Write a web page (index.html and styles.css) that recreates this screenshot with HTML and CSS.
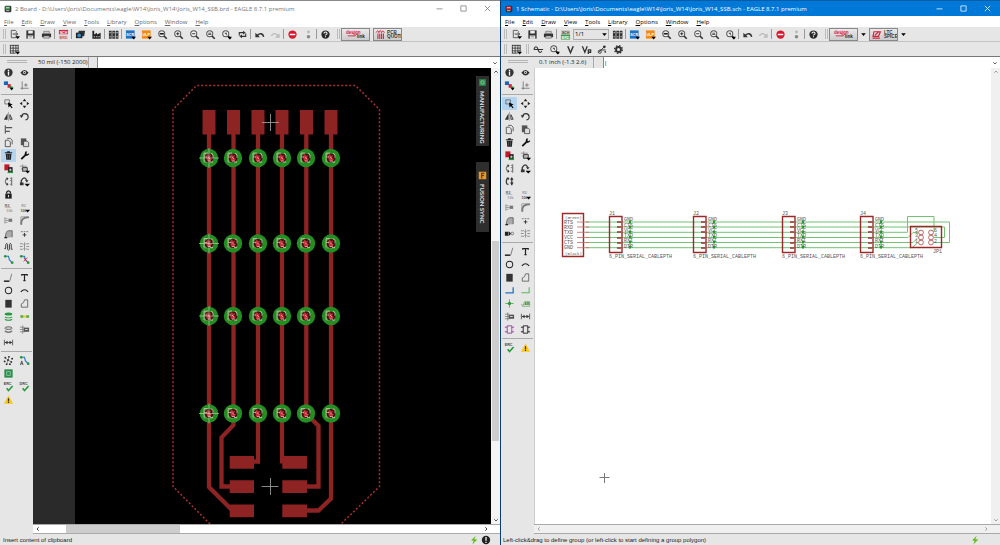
FILE: index.html
```html
<!DOCTYPE html>
<html lang="en">
<head>
<meta charset="utf-8">
<title>EAGLE 8.7.1 premium</title>
<link rel="stylesheet" href="styles.css">
</head>
<body>
<svg class="defs" aria-hidden="true">
<defs>
<symbol id="open" viewBox="0 0 12 12"><path d="M7 1.500H2.500v8H8V8M7 1.500l1.500 1.500" fill="none" stroke="#555"/><path d="M4 5.500h5M7.500 3.500l2 2-2 2" fill="none" stroke="#333"/><path d="M7 8h5l-2.500 3z"/></symbol>
<symbol id="save" viewBox="0 0 12 12"><path d="M1.500 1.500h9v9h-9z" fill="#333"/><path d="M3.500 2h5v3h-5zM3 7h6v3.500H3z" fill="#eee"/><path d="M4 8.500h4" stroke="#888"/></symbol>
<symbol id="print" viewBox="0 0 12 12"><path d="M1 5h10v4H1z" fill="#333"/><path d="M3 2.500h6V5H3zM3 7.500h6V10H3z" fill="#ccc" stroke="#555" stroke-width=".6"/></symbol>
<symbol id="sch" viewBox="0 0 12 12"><path d="M1 1h10v5H1z" fill="#d2263c"/><path d="M1 6h10v5.500H1z" fill="#ddd"/><text x="6" y="5.200" class="mini" fill="#fff">SCH</text><text x="6" y="10.400" class="mini" fill="#c55">BRD</text></symbol>
<symbol id="brd" viewBox="0 0 12 12"><path d="M1 1h10v5H1z" fill="#cfcfcf"/><path d="M1 6h10v5.500H1z" fill="#3f9a48"/><text x="6" y="5.200" class="mini" fill="#444">SCH</text><text x="6" y="10.400" class="mini" fill="#fff">BRD</text></symbol>
<symbol id="cam" viewBox="0 0 12 12"><path d="M4 2h7l-1 6H3z" fill="#333"/><path d="M1 4h7v6H1z" fill="#222"/><circle cx="4.500" cy="7" r="2" fill="#2b8ed0"/></symbol>
<symbol id="factory" viewBox="0 0 12 12"><path d="M1.500 10.500V2h2V6l3-2v2l4-2V10.500z" fill="#222"/><path d="M3 8.500h7" stroke="#ddd" stroke-dasharray="1.500 1"/></symbol>
<symbol id="books" viewBox="0 0 12 12"><path d="M1 2h3v8.500H1zM4.700 2h3v8.500h-3zM8.400 2h3v8.500h-3z" fill="#333"/><path d="M1.500 4h9.500M1.500 8.500h9.500" stroke="#bbb" stroke-dasharray="2 1.700"/></symbol>
<symbol id="scr" viewBox="0 0 12 12"><path d="M1 1.500h9.500v9H1z" fill="#1f74c4"/><text x="5.700" y="7.500" class="mini" fill="#fff">SCR</text><path d="M7 8.500h5l-2.500 3z"/></symbol>
<symbol id="ulp" viewBox="0 0 12 12"><path d="M1 1.500h9.500v9H1z" fill="#f28a13"/><text x="5.700" y="7.500" class="mini" fill="#fff">ULP</text><path d="M7 8.500h5l-2.500 3z"/></symbol>
<symbol id="lens" viewBox="0 0 12 12"><circle cx="5.200" cy="5.200" r="3.300" fill="#f2f2f2" stroke="#555" stroke-width="1.100"/><path d="M7.600 7.600l3 3" stroke="#333" stroke-width="1.800"/></symbol>
<symbol id="fit" viewBox="0 0 12 12"><use href="#lens"/><path d="M3 5.200h4.500" stroke="#222" stroke-width="1.800"/></symbol>
<symbol id="zin" viewBox="0 0 12 12"><use href="#lens"/><path d="M3.500 5.200h3.400M5.200 3.500v3.400" stroke="#222"/></symbol>
<symbol id="zout" viewBox="0 0 12 12"><use href="#lens"/><path d="M3.500 5.200h3.400" stroke="#222"/></symbol>
<symbol id="zredraw" viewBox="0 0 12 12"><use href="#lens"/><path d="M3.500 4.600h3.400M3.500 6h3.400" stroke="#222" stroke-width=".8"/></symbol>
<symbol id="zsel" viewBox="0 0 12 12"><use href="#lens"/><path d="M3.500 4h3v3z" fill="#555"/><path d="M7 8.500h5l-2.500 3z"/></symbol>
<symbol id="refresh" viewBox="0 0 12 12"><path d="M2.500 7V4h5M9.500 5v3h-5" fill="none" stroke="#333" stroke-width="1.200"/><path d="M6.500 2l3 2-3 2zM5.500 6l-3 2 3 2z" fill="#333"/></symbol>
<symbol id="undo" viewBox="0 0 12 12"><path d="M10.500 8.500C10 5 7 4 3.500 7" fill="none" stroke="#333" stroke-width="1.700"/><path d="M1.500 4v5h5z" fill="#333"/></symbol>
<symbol id="redo" viewBox="0 0 12 12"><path d="M1.500 7.500C3 4 6 4.500 8.500 7" fill="none" stroke="#bbb" stroke-width="1.500"/><path d="M10.500 4.500v5h-5z" fill="#bbb"/></symbol>
<symbol id="stop" viewBox="0 0 12 12"><circle cx="6" cy="6" r="4.500" fill="#d9182e"/><path d="M3 6h6" stroke="#fff" stroke-width="1.600"/></symbol>
<symbol id="go" viewBox="0 0 12 12"><circle cx="6" cy="3.300" r="1.600" fill="#bbb"/><circle cx="6" cy="8.500" r="1.900" fill="#888"/></symbol>
<symbol id="help" viewBox="0 0 12 12"><circle cx="6" cy="6" r="4.500" fill="#2a2a2a"/><path d="M4.300 4.800c0-2 3.400-2 3.400 0 0 1.200-1.700 1-1.700 2.200M6 7.800v1.200" fill="none" stroke="#fff" stroke-width="1.100"/></symbol>
<symbol id="grid" viewBox="0 0 12 12"><path d="M1.500 1v9M4.500 1v9M7.500 1v9M10 1v7M1 1.500h9.500M1 4.500h9.500M1 7.500h9.500M1 10h6" stroke="#333" stroke-width=".9"/><path d="M7 8.500h5l-2.500 3z"/></symbol>
<symbol id="wave" viewBox="0 0 12 12"><path d="M1 6c1-4 3.500-4 4.500 0s3 4 4 1.500M1 6h10" fill="none" stroke="#333" stroke-width="1.200"/></symbol>
<symbol id="volt" viewBox="0 0 12 12"><path d="M3 2.500l3 7 3-7" fill="none" stroke="#333" stroke-width="1.600"/></symbol>
<symbol id="voltp" viewBox="0 0 12 12"><path d="M1.500 2.500l2.700 6.500 2.600-6.500M8 11V6.500h2.500v2.500H8" fill="none" stroke="#333" stroke-width="1.400"/></symbol>
<symbol id="probe" viewBox="0 0 12 12"><path d="M2 9l6-6M3 6.500h6.500" stroke="#333"/><circle cx="8" cy="3" r="1.500" fill="#333"/><circle cx="3" cy="8.500" r="1.700" fill="none" stroke="#333"/><circle cx="9" cy="8.500" r="1" fill="#333"/></symbol>
<symbol id="gear" viewBox="0 0 12 12"><circle cx="6" cy="6" r="2.700" fill="none" stroke="#333" stroke-width="2"/><circle cx="6" cy="6" r="4.200" fill="none" stroke="#333" stroke-width="1.500" stroke-dasharray="1.600 1.700"/></symbol>
<symbol id="info" viewBox="0 0 12 12"><circle cx="6" cy="6" r="4.500" fill="#333"/><path d="M6 3v1.500M6 5.200v4" stroke="#fff" stroke-width="1.500"/></symbol>
<symbol id="eye" viewBox="0 0 12 12"><path d="M1.500 6.200q4.500-6 9 0-4.500 6-9 0z" fill="#333"/><circle cx="6" cy="6" r="1.600" fill="#eee"/><circle cx="6" cy="6" r=".8" fill="#333"/></symbol>
<symbol id="layers" viewBox="0 0 12 12"><path d="M1 1.500h4.500v4H1z" fill="#1765b8"/><path d="M5 4.500h3.500v4H5z" fill="#d2263c"/><path d="M7.500 7h3v3h-3z" fill="#249b3b"/><path d="M7.500 8.500h4l-2 3z"/></symbol>
<symbol id="mark" viewBox="0 0 12 12"><path d="M3.500 1.500v9M1.500 9h9M5.500 5.500h4M7.500 3.500v4" stroke="#666" stroke-width=".8"/></symbol>
<symbol id="group" viewBox="0 0 12 12"><path d="M2 2h5v4.500H2z" fill="none" stroke="#555" stroke-width=".8"/><path d="M5.500 5l5 2-2 1 2 2.500-1 .8-2-2.500-1.500 1.500z"/></symbol>
<symbol id="move" viewBox="0 0 12 12"><path d="M6 .8L8 3.500H4zM6 11.200L4 8.500h4zM.8 6L3.500 4v4zM11.200 6L8.500 8V4z" fill="#222"/></symbol>
<symbol id="mirror" viewBox="0 0 12 12"><path d="M5 2.500v7H1z" fill="#333"/><path d="M7.500 4v5H10z" fill="none" stroke="#333"/><path d="M6 1v10" stroke="#777" stroke-width=".6"/></symbol>
<symbol id="rotate" viewBox="0 0 12 12"><path d="M3 6a3.500 3.500 0 1 1 4 3.800" fill="none" stroke="#333" stroke-width="1.200"/><path d="M.8 4.500h4L2.500 7.500z" fill="#333"/></symbol>
<symbol id="align" viewBox="0 0 12 12"><path d="M2.500 1.500v9" stroke="#333"/><path d="M3 4h7M3 8h4.500" stroke="#555" stroke-width="1.500"/></symbol>
<symbol id="copy" viewBox="0 0 12 12"><path d="M4.500 1.500h3.500l2 2V8M2.500 3.500H6l2 2v5H2.500z" fill="none" stroke="#444" stroke-width=".9"/></symbol>
<symbol id="paste" viewBox="0 0 12 12"><path d="M2 1.500h6V9H2z" fill="#555"/><path d="M5 4.500h4l1.500 1.500v4.500H5z" fill="#ddd" stroke="#333" stroke-width=".8"/></symbol>
<symbol id="trash" viewBox="0 0 12 12"><path d="M2 3h8M4.500 2h3" stroke="#222" stroke-width="1.200"/><path d="M3 4h6.200l-.6 6.500h-5z" fill="#222"/><path d="M5 5v4.500M7 5v4.500" stroke="#777" stroke-width=".6"/></symbol>
<symbol id="wrench" viewBox="0 0 12 12"><path d="M2.500 10L8 4.500" stroke="#111" stroke-width="2"/><path d="M7 1.500l-1 3 2.500 2 2.500-1.500V3.500L9 4.500 8 3.500l1-2z" fill="#111"/></symbol>
<symbol id="add" viewBox="0 0 12 12"><path d="M1.500 1.500h5.500V8H1.500z" fill="#c4182c"/><path d="M5.500 4.500h5v6h-5z" fill="#222"/><path d="M6.500 7.500h3M8 6v3" stroke="#eee" stroke-width=".8"/><path d="M5 9.500h6v1.500H5z" fill="#249b3b"/></symbol>
<symbol id="replace" viewBox="0 0 12 12"><path d="M1 3.500h7.500M2 6.500h7M4 1.500v8" stroke="#777" stroke-width=".8"/><path d="M4 5h5v4H4z" fill="#bbb" stroke="#333"/><path d="M7 8.500h5l-2.500 3z"/></symbol>
<symbol id="pinswap" viewBox="0 0 12 12"><path d="M5 3H3.500Q1.500 6 3.500 9H5M9.500 1.500v9" fill="none" stroke="#555"/><path d="M7.500 2.500h2M7.500 5h2M7.500 9h2" stroke="#777"/><path d="M4 1l2 2-2 2zM4 7l2 2-2 2z" fill="#333"/></symbol>
<symbol id="gateswap" viewBox="0 0 12 12"><path d="M2.500 8V5Q6-1 8.500 5" fill="none" stroke="#333" stroke-width="1.400"/><path d="M1 7h4v3H1zM6.500 4.500h4L8.500 7z" fill="#333"/><path d="M6 8.500h6l-3 3z"/></symbol>
<symbol id="swap" viewBox="0 0 12 12"><path d="M5 2.500H3.500Q1.500 6 3.500 9H5M8.500 3v7" fill="none" stroke="#333" stroke-width="1.300"/><path d="M4 1l2 2-2 2zM6.500 4h4l-2-3zM6.500 7h4l-2 3z" fill="#333"/></symbol>
<symbol id="lock" viewBox="0 0 12 12"><path d="M2.500 5h7v5.500h-7z" fill="#222"/><path d="M4 5V3.500q2-3 4 0V5" fill="none" stroke="#222" stroke-width="1.400"/><path d="M6 6.500v2.500" stroke="#eee"/></symbol>
<symbol id="name" viewBox="0 0 12 12"><text x="4.500" y="5" class="mini" fill="#666">R2</text><text x="7" y="10.500" class="mini" fill="#999">10k</text><path d="M2 6h7" stroke="#aaa" stroke-width=".7"/></symbol>
<symbol id="value" viewBox="0 0 12 12"><text x="5" y="5" class="mini" fill="#999">R2</text><text x="5" y="10.500" class="mini" fill="#555">10k</text><path d="M7 8.500h5l-2.500 3z"/></symbol>
<symbol id="smash" viewBox="0 0 12 12"><path d="M2 2.500v7M2 4h3M2 6h4M2 8h3" stroke="#999"/><path d="M6 4h4v3.500H6z" fill="#777"/></symbol>
<symbol id="miter" viewBox="0 0 12 12"><path d="M2.500 10.500V8Q3 3 9 2.500h2" fill="none" stroke="#777" stroke-width="2"/><path d="M2 10V2h8" fill="none" stroke="#888" stroke-width=".8"/></symbol>
<symbol id="split" viewBox="0 0 12 12"><path d="M2.500 10.500Q3 3 6 3h4v7" fill="#aaa" stroke="#666"/><path d="M1.500 10.500h3" stroke="#222" stroke-width="1.500"/></symbol>
<symbol id="optimize" viewBox="0 0 12 12"><path d="M2 4h2M5 4h2M8 4h2" stroke="#777"/><path d="M4 7.500h4M6 5.500v4" stroke="#333"/></symbol>
<symbol id="meander" viewBox="0 0 12 12"><path d="M1.500 8q1.500 2 1.500-1.500V4q1-3 2 0v5q1 2.500 2 0V4q1-3 2 0v5h1.500" fill="none" stroke="#333"/></symbol>
<symbol id="slice" viewBox="0 0 12 12"><path d="M1 3h3l1 1M1 6h3M1 9h3l1-1M11 3H8L7 4M11 6H8M11 9H8L7 8M6 1.500v9" fill="none" stroke="#777" stroke-width=".8"/></symbol>
<symbol id="invoke" viewBox="0 0 12 12"><path d="M1 4h3.500v4.500H1zM5 3.500L8 6 5 9z" fill="#222"/><circle cx="9" cy="6" r="1.500" fill="none" stroke="#777"/></symbol>
<symbol id="route" viewBox="0 0 12 12"><path d="M2 2.500h4l1 4 3 3" fill="none" stroke="#2a77c9" stroke-width="1.200"/><circle cx="2.500" cy="2.500" r="1.500" fill="#249b3b"/><circle cx="10" cy="9.500" r="1.500" fill="#249b3b"/></symbol>
<symbol id="ripup" viewBox="0 0 12 12"><use href="#route"/><path d="M5 4l4 4M9 4L5 8" stroke="#d2263c"/></symbol>
<symbol id="line" viewBox="0 0 12 12"><path d="M1 10h6" stroke="#111" stroke-width="1.500"/><path d="M7.500 9.500L9.500 2" stroke="#777"/></symbol>
<symbol id="text" viewBox="0 0 12 12"><path d="M3 4V2.800h6V4M6 2.500v7M4.800 9.500h2.400" fill="none" stroke="#222" stroke-width="1.300"/></symbol>
<symbol id="circle" viewBox="0 0 12 12"><circle cx="6" cy="6" r="3.500" fill="none" stroke="#222" stroke-width="1.100"/></symbol>
<symbol id="arc" viewBox="0 0 12 12"><path d="M2 7.500q4-4.500 8 0" fill="none" stroke="#222" stroke-width="1.200"/></symbol>
<symbol id="rect" viewBox="0 0 12 12"><path d="M2.500 2h7v8.500h-7z" fill="#333"/></symbol>
<symbol id="poly" viewBox="0 0 12 12"><path d="M2.500 10V6.500L5 5l1-3h3.500v8z" fill="none" stroke="#666"/></symbol>
<symbol id="via" viewBox="0 0 12 12"><path d="M2 2.500q4-2 8 0v1.500q-4 2-8 0zM2 6q4 2 8 0v1q-4 2-8 0zM2 8.500q4 2 8 0v1.200q-4 2-8 0z" fill="#249b3b"/></symbol>
<symbol id="signal" viewBox="0 0 12 12"><path d="M3 6h6" stroke="#e9c52f" stroke-width="2"/><path d="M1.500 6h3M8 6h3" stroke="#55ad3d" stroke-width="2.500"/></symbol>
<symbol id="hole" viewBox="0 0 12 12"><ellipse cx="6" cy="4.500" rx="4" ry="1.500" fill="#ccc" stroke="#666"/><path d="M2 7.500q4 3 8 0" fill="none" stroke="#777" stroke-width="1.500"/></symbol>
<symbol id="attr" viewBox="0 0 12 12"><path d="M1 3.500h5M1 6h4M1 8.500h5M4 1.500v9" stroke="#777" stroke-width=".8"/><path d="M5 4h6v4.500H5z" fill="#555"/><path d="M6.500 6h3" stroke="#ddd"/></symbol>
<symbol id="dim" viewBox="0 0 12 12"><path d="M1.500 3v6M10.500 3v6M2 6h8" stroke="#555"/><path d="M2 6l3-2v4zM10 6L7 4v4z" fill="#333"/></symbol>
<symbol id="rats" viewBox="0 0 12 12"><g fill="#222"><circle cx="2.500" cy="3" r="1"/><circle cx="6.500" cy="2" r="1"/><circle cx="10" cy="4" r="1"/><circle cx="5.500" cy="5.500" r="1.200"/><circle cx="1.800" cy="7" r="1"/><circle cx="9" cy="7.500" r="1"/><circle cx="4" cy="10" r="1"/><circle cx="7.500" cy="10" r="1"/></g><path d="M2.500 3l3 2.500 3.500 2M4 10l1.500-4.500 1-3.500" fill="none" stroke="#666" stroke-width=".7"/></symbol>
<symbol id="auto" viewBox="0 0 12 12"><use href="#route"/><path d="M1.500 11L3 6.500 4.500 11M2 9.500h2" fill="none" stroke="#333" stroke-width=".8"/></symbol>
<symbol id="board" viewBox="0 0 12 12"><path d="M1.500 1.500h9v9h-9z" fill="#2b8a4a"/><path d="M4 4h4v4H4z" fill="none" stroke="#8ed2a0"/></symbol>
<symbol id="erc" viewBox="0 0 12 12"><text x="5" y="4.500" class="mini" fill="#444">ERC</text><path d="M4 8l2 2.500L10.500 5.500" fill="none" stroke="#249b3b" stroke-width="1.700"/></symbol>
<symbol id="drc" viewBox="0 0 12 12"><text x="5" y="4.500" class="mini" fill="#444">DRC</text><path d="M4 8l2 2.500L10.500 5.500" fill="none" stroke="#249b3b" stroke-width="1.700"/></symbol>
<symbol id="warn" viewBox="0 0 12 12"><path d="M6 1.500l5 9H1z" fill="#f8c613"/><path d="M6 4.500v3M6 8.300v1.400" stroke="#333" stroke-width="1.300"/></symbol>
<symbol id="bus" viewBox="0 0 12 12"><path d="M1.500 8.500h8.500V2.500" fill="none" stroke="#1f74c4" stroke-width="1.400"/></symbol>
<symbol id="net" viewBox="0 0 12 12"><path d="M1.500 8.500h8.500V2.500" fill="none" stroke="#5bb85b" stroke-width="1.200"/></symbol>
<symbol id="junction" viewBox="0 0 12 12"><path d="M1.500 6h9M6 1.500v9" stroke="#4eb34e"/><circle cx="6" cy="6" r="1.800" fill="#249b3b"/></symbol>
<symbol id="label" viewBox="0 0 12 12"><path d="M1.500 6.500l1.500 2.500h7.500V4H5L3 9" fill="none" stroke="#58aa58" stroke-width=".8"/><text x="7.500" y="8" class="mini" fill="#357a35">AB</text></symbol>
<symbol id="module" viewBox="0 0 12 12"><path d="M3.500 2h5v8h-5zM1 3.500h2.500M1 8.500h2.500M8.500 3.500H11M8.500 8.500H11" fill="none" stroke="currentColor"/></symbol>
<symbol id="bolt" viewBox="0 0 12 12"><path d="M8 1L2.500 6.500 5.500 7 4 11.500 10 5.500 6.500 5z" fill="#66bb22"/></symbol>
<symbol id="alert" viewBox="0 0 12 12"><circle cx="6" cy="6" r="5" fill="#222"/><path d="M6 2.500v4.500M6 8v1.500" stroke="#fff" stroke-width="1.500"/></symbol>
<symbol id="app" viewBox="0 0 12 12"><rect x="1" y="1" width="10" height="10" rx="2" fill="#333"/><path d="M2 2h7v5H2z" fill="currentColor"/><path d="M3 4h5M3 8.500h5" stroke="#fff"/></symbol>
<symbol id="min" viewBox="0 0 12 12"><path d="M2 6.500h8" stroke="currentColor"/></symbol>
<symbol id="max" viewBox="0 0 12 12"><path d="M2.500 2.500h7v7h-7z" fill="none" stroke="currentColor"/></symbol>
<symbol id="close" viewBox="0 0 12 12"><path d="M2.500 2.500l7 7M9.500 2.500l-7 7" stroke="currentColor"/></symbol>
<symbol id="chev" viewBox="0 0 12 12"><path d="M2.500 4.500L6 8l3.500-3.500" fill="none" stroke="currentColor" stroke-width="1.800"/></symbol>
<symbol id="tri" viewBox="0 0 12 12"><path d="M2 4h8L6 8.500z"/></symbol>
<symbol id="dlink" viewBox="0 0 28 12"><text x="3" y="5.500" class="logo" fill="#d2263c">design</text><path d="M5 7.500h8M10 4l4 4" stroke="#d2263c"/><text x="15" y="10" class="logo" fill="#222">link</text></symbol>
<symbol id="quote" viewBox="0 0 28 12"><path d="M3 5v6M5 5v6M7 5v6M9 5v6" stroke="#d2263c" stroke-width="1.200"/><path d="M1 4q2-4 3 0 1.500-5 3 0 1.500-4 3 0" fill="none" stroke="#d2263c"/><text x="13" y="5.500" class="logo" fill="#333">PCB</text><text x="13" y="10" class="logo" fill="#333">QUOTE</text></symbol>
<symbol id="spice" viewBox="0 0 28 12"><path d="M3 3h7l-2 5H2z" fill="none" stroke="#d2263c" stroke-width="1.300"/><path d="M1.500 10h8M4 7l4-4" stroke="#d2263c" stroke-width="1.300"/><text x="14" y="5.500" class="logo" fill="#333">LTC</text><text x="14" y="10" class="logo" fill="#333">SPICE</text></symbol>
<g id="viapad"><circle r="9.200" fill="#238f23"/><path d="M-5-5h9v10h-9z" fill="#5a9c45"/><circle r="4.500" fill="#3b1111"/><path d="M-3-2l2-2 1 2 2-1-1 3 2 1-3 3-2-1" fill="#c9303c"/><path d="M-5 4v-9h4M-5-1h3M2-5l2 2v3M1 4h3M-1-1l2 2M-1 3h3" fill="none" stroke="#d5c8b9" stroke-width=".7"/></g>
<g id="viarow"><use href="#viapad" x="209"/><use href="#viapad" x="233"/><use href="#viapad" x="258"/><use href="#viapad" x="282"/><use href="#viapad" x="306"/><use href="#viapad" x="331"/><path d="M199 0h20M209-10v20" stroke="#c8d8b8" stroke-width=".6"/></g>
<g id="conn"><path d="M.5 16.500h12.500v36H.5z" fill="none" stroke="#9a2a2a" stroke-width="1.400"/><path d="M8 22h4M8 27h4M8 32h4M8 38h4M8 43h4M8 48h4" stroke="#a03030" stroke-width="1.400"/><g class="sch"><text x="15" y="21">GND</text><text x="15" y="27">CTS</text><text x="15" y="32">VCC</text><text x="15" y="37">TXO</text><text x="15" y="42">RXI</text><text x="15" y="48">DTR</text><text x="0" y="58">6_PIN_SERIAL_CABLEPTH</text></g><path d="M21 20.500v29" stroke="#259a25" stroke-width="2" stroke-dasharray="3 2"/></g>
</defs>
</svg>

<main class="desktop">
<section class="window board" aria-label="Board">
<header class="titlebar"><svg class="ico" color="#3a9a4a"><use href="#app"/></svg><h1>2 Board - D:\Users\Joris\Documents\eagle\W14\Joris_W14\Joris_W14_SSB.brd - EAGLE 8.7.1 premium</h1><div class="winbtns"><button aria-label="Minimize"><svg><use href="#min"/></svg></button><button aria-label="Maximize"><svg><use href="#max"/></svg></button><button aria-label="Close"><svg><use href="#close"/></svg></button></div></header>
<nav class="menu"><button><u>F</u>ile</button><button><u>E</u>dit</button><button><u>D</u>raw</button><button><u>V</u>iew</button><button><u>T</u>ools</button><button><u>L</u>ibrary</button><button><u>O</u>ptions</button><button><u>W</u>indow</button><button><u>H</u>elp</button></nav>
<div class="bar"><i class="grip"></i><button aria-label="Open"><svg><use href="#open"/></svg></button><button aria-label="Save"><svg><use href="#save"/></svg></button><button aria-label="Print"><svg><use href="#print"/></svg></button><i class="sep"></i><button aria-label="Schematic"><svg><use href="#sch"/></svg></button><i class="sep"></i><button aria-label="CAM"><svg><use href="#cam"/></svg></button><button aria-label="Manufacture"><svg><use href="#factory"/></svg></button><i class="sep"></i><button aria-label="Library"><svg><use href="#books"/></svg></button><i class="sep"></i><button aria-label="Script"><svg><use href="#scr"/></svg></button><button aria-label="Run ULP"><svg><use href="#ulp"/></svg></button><button aria-label="Fit"><svg><use href="#fit"/></svg></button><button aria-label="Zoom in"><svg><use href="#zin"/></svg></button><button aria-label="Zoom out"><svg><use href="#zout"/></svg></button><button aria-label="Redraw"><svg><use href="#zredraw"/></svg></button><button aria-label="Zoom select"><svg><use href="#zsel"/></svg></button><button aria-label="Refresh"><svg><use href="#refresh"/></svg></button><i class="sep"></i><button aria-label="Undo"><svg><use href="#undo"/></svg></button><button aria-label="Redo"><svg><use href="#redo"/></svg></button><i class="sep"></i><button aria-label="Stop"><svg><use href="#stop"/></svg></button><button aria-label="Go"><svg><use href="#go"/></svg></button><i class="sep"></i><button aria-label="Help"><svg><use href="#help"/></svg></button><i class="grip mid"></i><button class="brand" aria-label="Design link"><svg><use href="#dlink"/></svg></button><button class="brand" aria-label="PCB quote"><svg><use href="#quote"/></svg></button></div>
<div class="bar second"><i class="grip"></i><button aria-label="Grid"><svg><use href="#grid"/></svg></button></div>
<div class="work">
<aside class="tools"><i class="hgrip"></i>
<div class="set"><button aria-label="Info"><svg><use href="#info"/></svg></button><button aria-label="Show"><svg><use href="#eye"/></svg></button><button aria-label="Layers"><svg><use href="#layers"/></svg></button><button aria-label="Mark"><svg><use href="#mark"/></svg></button></div>
<div class="set"><button aria-label="Group"><svg><use href="#group"/></svg></button><button aria-label="Move"><svg><use href="#move"/></svg></button><button aria-label="Mirror"><svg><use href="#mirror"/></svg></button><button aria-label="Rotate"><svg><use href="#rotate"/></svg></button><button class="solo" aria-label="Align"><svg><use href="#align"/></svg></button><button aria-label="Copy"><svg><use href="#copy"/></svg></button><button aria-label="Paste"><svg><use href="#paste"/></svg></button><button class="on" aria-label="Delete"><svg><use href="#trash"/></svg></button><button aria-label="Change"><svg><use href="#wrench"/></svg></button><button aria-label="Add"><svg><use href="#add"/></svg></button><button aria-label="Replace"><svg><use href="#replace"/></svg></button><button aria-label="Pinswap"><svg><use href="#pinswap"/></svg></button><button aria-label="Gateswap"><svg><use href="#gateswap"/></svg></button><button class="solo" aria-label="Lock"><svg><use href="#lock"/></svg></button><button aria-label="Name"><svg><use href="#name"/></svg></button><button aria-label="Value"><svg><use href="#value"/></svg></button><button aria-label="Smash"><svg><use href="#smash"/></svg></button><button aria-label="Miter"><svg><use href="#miter"/></svg></button><button aria-label="Split"><svg><use href="#split"/></svg></button><button aria-label="Optimize"><svg><use href="#optimize"/></svg></button><button aria-label="Meander"><svg><use href="#meander"/></svg></button><button aria-label="Slice"><svg><use href="#slice"/></svg></button><button aria-label="Route"><svg><use href="#route"/></svg></button><button aria-label="Ripup"><svg><use href="#ripup"/></svg></button></div>
<div class="set"><button aria-label="Line"><svg><use href="#line"/></svg></button><button aria-label="Text"><svg><use href="#text"/></svg></button><button aria-label="Circle"><svg><use href="#circle"/></svg></button><button aria-label="Arc"><svg><use href="#arc"/></svg></button><button aria-label="Rectangle"><svg><use href="#rect"/></svg></button><button aria-label="Polygon"><svg><use href="#poly"/></svg></button><button aria-label="Via"><svg><use href="#via"/></svg></button><button aria-label="Signal"><svg><use href="#signal"/></svg></button><button aria-label="Hole"><svg><use href="#hole"/></svg></button><button aria-label="Attribute"><svg><use href="#attr"/></svg></button><button class="solo" aria-label="Dimension"><svg><use href="#dim"/></svg></button></div>
<div class="set"><button aria-label="Ratsnest"><svg><use href="#rats"/></svg></button><button aria-label="Autorouter"><svg><use href="#auto"/></svg></button><button class="solo" aria-label="Board shape"><svg><use href="#board"/></svg></button><button aria-label="ERC"><svg><use href="#erc"/></svg></button><button aria-label="DRC"><svg><use href="#drc"/></svg></button><button aria-label="Errors"><svg><use href="#warn"/></svg></button></div>
</aside>
<div class="view">
<div class="command"><output>50 mil (-150 2000)</output><input type="text" aria-label="Command"><svg class="ico"><use href="#chev"/></svg></div>
<div class="sheet">
<div class="canvas dark"><svg class="drawing" width="416" height="456" viewBox="75 68 416 456">
<path d="M210 524L173 486.500V109.500L196.500 85.500H355.500L379.500 109.500V486.500L341 524" fill="none" stroke="#a83030" stroke-width="1.500" stroke-dasharray="2 2"/>
<g fill="#8e2323"><path d="M202.500 110h13v24.500h-13zM227 110h13v24.500h-13zM251.500 110h13v24.500h-13zM275.500 110h13v24.500h-13zM300 110h13v24.500h-13zM324.500 110h13v24.500h-13z"/><path d="M229.700 456H254v12.700h-24.300zM229.700 480.300H254V493h-24.300zM229.700 504.500H254v12.700h-24.300zM282.300 456H307v12.700h-24.700zM282.300 480.300H307V493h-24.700zM282.300 504.500H307v12.700h-24.700z"/></g>
<g fill="none" stroke="#8e2323" stroke-width="4.300"><path d="M209 130V487L233 511M233.500 130V425L221.500 437.500V486.500H232M258 130V461.500H252M282 130V463.500M306.300 130V413.500L318.500 426V486.500H305M331 130V498.500L318.500 510.500H305"/></g>
<use href="#viarow" y="158"/><use href="#viarow" y="243.500"/><use href="#viarow" y="316"/><use href="#viarow" y="413.500"/>
<path d="M262 122.500h17M270.500 114v17M261.500 486.500h17M270.500 478v17" stroke="#aaa" stroke-width=".8"/>
</svg>
<div class="tabs"><button><svg><use href="#board"/></svg>MANUFACTURING</button><button><svg viewBox="0 0 12 12"><path d="M1 1h10v10H1z" fill="#e39a2b"/><path d="M5 10V3h3.500M5 6h3" fill="none" stroke="#5a3500" stroke-width="1.500"/></svg>FUSION SYNC</button></div>
</div>
<div class="vscroll"><svg class="up"><use href="#chev"/></svg><i class="thumb"></i><svg><use href="#chev"/></svg></div>
</div>
<div class="hscroll"><svg class="left"><use href="#chev"/></svg><i class="thumb"></i><svg class="right"><use href="#chev"/></svg></div>
</div>
</div>
<footer class="status"><span>Insert content of clipboard</span><svg><use href="#bolt"/></svg><svg><use href="#alert"/></svg></footer>
</section>

<section class="window schematic" aria-label="Schematic">
<header class="titlebar"><svg class="ico" color="#c8283a"><use href="#app"/></svg><h1>1 Schematic - D:\Users\Joris\Documents\eagle\W14\Joris_W14\Joris_W14_SSB.sch - EAGLE 8.7.1 premium</h1><div class="winbtns"><button aria-label="Minimize"><svg><use href="#min"/></svg></button><button aria-label="Maximize"><svg><use href="#max"/></svg></button><button aria-label="Close"><svg><use href="#close"/></svg></button></div></header>
<nav class="menu"><button><u>F</u>ile</button><button><u>E</u>dit</button><button><u>D</u>raw</button><button><u>V</u>iew</button><button><u>T</u>ools</button><button><u>L</u>ibrary</button><button><u>O</u>ptions</button><button><u>W</u>indow</button><button><u>H</u>elp</button></nav>
<div class="bar"><i class="grip"></i><button aria-label="Open"><svg><use href="#open"/></svg></button><button aria-label="Save"><svg><use href="#save"/></svg></button><button aria-label="Print"><svg><use href="#print"/></svg></button><i class="sep"></i><button aria-label="Board"><svg><use href="#brd"/></svg></button><div class="picker"><select aria-label="Sheet"><option>1/1</option></select><svg><use href="#tri"/></svg></div><button aria-label="Library"><svg><use href="#books"/></svg></button><i class="sep"></i><button aria-label="Script"><svg><use href="#scr"/></svg></button><button aria-label="Run ULP"><svg><use href="#ulp"/></svg></button><button aria-label="Fit"><svg><use href="#fit"/></svg></button><button aria-label="Zoom in"><svg><use href="#zin"/></svg></button><button aria-label="Zoom out"><svg><use href="#zout"/></svg></button><button aria-label="Redraw"><svg><use href="#zredraw"/></svg></button><button aria-label="Zoom select"><svg><use href="#zsel"/></svg></button><i class="sep"></i><button aria-label="Undo"><svg><use href="#undo"/></svg></button><button aria-label="Redo"><svg><use href="#redo"/></svg></button><i class="sep"></i><button aria-label="Stop"><svg><use href="#stop"/></svg></button><button aria-label="Go"><svg><use href="#go"/></svg></button><i class="sep"></i><button aria-label="Help"><svg><use href="#help"/></svg></button><i class="grip mid"></i><button class="brand" aria-label="Design link"><svg><use href="#dlink"/></svg></button><button class="drop" aria-label="Design link options"><svg><use href="#tri"/></svg></button><button class="brand" aria-label="LTC spice"><svg><use href="#spice"/></svg></button><button class="drop" aria-label="Spice options"><svg><use href="#tri"/></svg></button></div>
<div class="bar second"><i class="grip"></i><button aria-label="Grid"><svg><use href="#grid"/></svg></button><i class="grip"></i><button aria-label="Simulate"><svg><use href="#wave"/></svg></button><button aria-label="Inspect"><svg><use href="#zsel"/></svg></button><button aria-label="Voltage"><svg><use href="#volt"/></svg></button><button aria-label="Voltage probe"><svg><use href="#voltp"/></svg></button><button aria-label="Probe"><svg><use href="#probe"/></svg></button><button aria-label="Settings"><svg><use href="#gear"/></svg></button></div>
<div class="work">
<aside class="tools"><i class="hgrip"></i>
<div class="set"><button aria-label="Info"><svg><use href="#info"/></svg></button><button aria-label="Show"><svg><use href="#eye"/></svg></button><button aria-label="Layers"><svg><use href="#layers"/></svg></button><button aria-label="Mark"><svg><use href="#mark"/></svg></button></div>
<div class="set"><button class="on" aria-label="Group"><svg><use href="#group"/></svg></button><button aria-label="Move"><svg><use href="#move"/></svg></button><button aria-label="Mirror"><svg><use href="#mirror"/></svg></button><button aria-label="Rotate"><svg><use href="#rotate"/></svg></button><button aria-label="Copy"><svg><use href="#copy"/></svg></button><button aria-label="Paste"><svg><use href="#paste"/></svg></button><button aria-label="Delete"><svg><use href="#trash"/></svg></button><button aria-label="Change"><svg><use href="#wrench"/></svg></button><button aria-label="Add"><svg><use href="#add"/></svg></button><button aria-label="Replace"><svg><use href="#replace"/></svg></button><button aria-label="Pinswap"><svg><use href="#pinswap"/></svg></button><button aria-label="Gateswap"><svg><use href="#gateswap"/></svg></button><button class="solo" aria-label="Swap"><svg><use href="#swap"/></svg></button><button aria-label="Name"><svg><use href="#name"/></svg></button><button aria-label="Value"><svg><use href="#value"/></svg></button><button aria-label="Smash"><svg><use href="#smash"/></svg></button><button aria-label="Miter"><svg><use href="#miter"/></svg></button><button aria-label="Split"><svg><use href="#split"/></svg></button><button aria-label="Optimize"><svg><use href="#optimize"/></svg></button><button aria-label="Invoke"><svg><use href="#invoke"/></svg></button><button aria-label="Slice"><svg><use href="#slice"/></svg></button></div>
<div class="set"><button aria-label="Line"><svg><use href="#line"/></svg></button><button aria-label="Text"><svg><use href="#text"/></svg></button><button aria-label="Circle"><svg><use href="#circle"/></svg></button><button aria-label="Arc"><svg><use href="#arc"/></svg></button><button aria-label="Rectangle"><svg><use href="#rect"/></svg></button><button aria-label="Polygon"><svg><use href="#poly"/></svg></button><button aria-label="Bus"><svg><use href="#bus"/></svg></button><button aria-label="Net"><svg><use href="#net"/></svg></button><button aria-label="Junction"><svg><use href="#junction"/></svg></button><button aria-label="Label"><svg><use href="#label"/></svg></button><button aria-label="Attribute"><svg><use href="#attr"/></svg></button><button aria-label="Dimension"><svg><use href="#dim"/></svg></button><button class="purple" aria-label="Module"><svg><use href="#module"/></svg></button><button aria-label="Port"><svg><use href="#module"/></svg></button></div>
<div class="set"><button aria-label="ERC"><svg><use href="#erc"/></svg></button><button aria-label="Errors"><svg><use href="#warn"/></svg></button></div>
</aside>
<div class="view">
<div class="command"><output>0.1 inch (-1.3 2.6)</output><input type="text" value="|" aria-label="Command"><svg class="ico"><use href="#chev"/></svg></div>
<div class="sheet">
<div class="canvas"><svg class="drawing" width="456" height="456" viewBox="535 68 456 456">
<g fill="none" stroke="#72c272" stroke-width="1"><path d="M586 222H949.500V242.500H934M586 227H944.500V237.500H934M586 232.300H907.500V216.500H934V232M586 237.500H908L913 232.500H918M586 242.500H913L918 237.500M586 247.700H912L918 242.500"/></g>
<path d="M562.500 213.500h21v43h-21zM910.500 226.500h31v21h-31z" fill="none" stroke="#9a2a2a" stroke-width="1.400"/>
<path d="M577 222h12M577 227h12M577 232.300h12M577 237.500h12M577 242.500h12M577 247.700h12" stroke="#c66" stroke-width=".8"/>
<g fill="none" stroke="#b04040" stroke-width=".8"><circle cx="921" cy="232.500" r="2.400"/><circle cx="921" cy="237.500" r="2.400"/><circle cx="921" cy="242.500" r="2.400"/><circle cx="931" cy="232.500" r="2.400"/><circle cx="931" cy="237.500" r="2.400"/><circle cx="931" cy="242.500" r="2.400"/></g>
<g class="sch"><text x="565" y="219" class="small">(Green)</text><text x="564" y="224">RTS</text><text x="564" y="229">RXD</text><text x="564" y="234">TXD</text><text x="564" y="239">VCC</text><text x="564" y="244">CTS</text><text x="564" y="249">GND</text><text x="565" y="255" class="small">(Black)</text><text x="609" y="215">J1</text><text x="693" y="215">J2</text><text x="782" y="215">J3</text><text x="860" y="215">J4</text><text x="933" y="253">JP1</text><text x="915" y="232">5</text><text x="915" y="237">3</text><text x="915" y="243">1</text><text x="934" y="232">6</text><text x="934" y="237">4</text><text x="934" y="243">2</text></g>
<use href="#conn" x="609" y="200"/><use href="#conn" x="693" y="200"/><use href="#conn" x="782" y="200"/><use href="#conn" x="860" y="200"/>
<path d="M599.500 477.500h10M604.500 473v10" stroke="#777"/>
</svg></div>
<div class="vscroll"><svg class="up"><use href="#chev"/></svg><svg><use href="#chev"/></svg></div>
</div>
<div class="hscroll"><svg class="left"><use href="#chev"/></svg><svg class="right"><use href="#chev"/></svg></div>
</div>
</div>
<footer class="status"><span>Left-click&amp;drag to define group (or left-click to start defining a group polygon)</span><svg><use href="#bolt"/></svg></footer>
</section>
</main>
</body>
</html>
```
FILE: styles.css
```css
* { box-sizing: border-box; }
body { margin: 0; font-family: "Open Sans", "Noto Sans", sans-serif; font-size: 6px; color: #222; }
svg { display: block; flex: none; }
button { display: flex; align-items: center; justify-content: center; padding: 0; border: 0; background: none; font: inherit; color: inherit; }
.defs { position: absolute; width: 0; height: 0; }
.mini { font: bold 4px "Liberation Sans", sans-serif; text-anchor: middle; }
.logo { font: bold 5px "Liberation Sans", sans-serif; }
.sch text { font: 5px "Liberation Mono", monospace; fill: #555; }
.sch .small { font-size: 4px; }

.desktop { display: grid; grid-template-columns: 1fr 1fr; min-height: 100vh; }
.window { display: flex; flex-direction: column; min-width: 0; background: #e6e6e6; border-top: 1px solid #888; }
.schematic { border-left: 1px solid #0b3d6e; border-top-color: #0a5ca5; }

.titlebar { display: flex; align-items: center; height: 15px; padding-left: 4px; background: #fff; color: #777; }
.titlebar h1 { flex: 1; margin: 0 0 0 3px; font-size: 6px; font-weight: 400; line-height: 12px; white-space: nowrap; }
.ico { width: 8px; height: 8px; }
.schematic .titlebar { background: #0078d7; color: #fff; }
.winbtns { display: flex; padding-right: 1px; }
.winbtns button { width: 24px; height: 15px; }
.winbtns svg { width: 9px; height: 9px; }

.menu { display: flex; gap: 8px; height: 11px; padding-left: 4px; background: #fff; }
.board .menu { color: #666; }
.schematic .menu { color: #000; }

.bar { display: flex; align-items: center; height: 15px; border-bottom: 1px solid #c4c4c4; }
.bar button { width: 16px; height: 14px; }
.bar svg { width: 11px; height: 11px; }
.grip { width: 3px; height: 10px; margin-left: 3px; border: solid #bbb; border-width: 0 1px; }
.schematic .grip { margin-right: 1px; }
.sep { width: 1px; height: 10px; background: #999; }
.bar .grip.mid { margin: 0 1px 0 4px; }
.bar .brand { width: 29px; height: 13px; margin-right: 3px; border: 1px solid #888; background: linear-gradient(#e8e8e8, #ccc); }
.bar .brand svg { width: 26px; height: 11px; }
.bar .brand + .drop { width: 6px; margin-right: 3px; }
.bar .drop svg { width: 7px; height: 7px; }
.schematic .brand { margin-right: 2px; }
.picker { display: flex; align-items: center; width: 36px; height: 11px; border: 1px solid #aaa; background: #e4e4e4; }
.picker select { flex: 1; min-width: 0; padding: 0 0 0 1px; border: 0; background: none; font: inherit; appearance: none; }
.bar .picker svg { width: 7px; height: 7px; }
.second { border-bottom-color: #777; }
.second .grip + button ~ .grip { margin-left: 2px; }

.work { flex: 1; display: flex; min-height: 0; }
.tools { width: 33px; padding: 0 1px; }
.hgrip { display: block; width: 20px; height: 3px; margin: 3px 0 3px 6px; border: solid #b5b5b5; border-width: 1px 0; }
.set { display: grid; grid-template-columns: 16px 16px; grid-auto-rows: 13px; }
.set + .set { margin-top: 2px; padding-top: 2px; border-top: 1px solid #aaa; }
.set button { width: 15px; height: 13px; }
.set svg { width: 11px; height: 11px; }
.set .solo { grid-column: 1 / 2; margin-right: 16px; }
.set .solo + button { grid-column: 1; }
.set .on { background: #b5d5ee; }
.purple { color: #9a3fa0; }

.view { flex: 1; display: flex; flex-direction: column; min-width: 0; }
.command { display: flex; align-items: center; height: 11px; background: #fff; }
.command output { width: 64px; height: 11px; padding-left: 5px; background: linear-gradient(90deg, #e6e6e6 55px, #aaa 55px, #aaa 56px, #e6e6e6 56px); line-height: 11px; white-space: nowrap; }
.schematic .command output { width: 69px; background: linear-gradient(90deg, #e6e6e6 59px, #aaa 59px, #aaa 60px, #e6e6e6 60px); }
.command input { flex: 1; min-width: 0; height: 11px; padding: 0; border: 0; border-left: 1px solid #888; font: inherit; }
.command .ico { width: 6px; height: 6px; margin-right: 2px; color: #555; }
.sheet { flex: 1; display: flex; min-height: 0; }
.canvas { position: relative; flex: 1; min-width: 0; overflow: hidden; background: #fff; border-left: 1px solid #ccc; }
.canvas.dark { background: #000; border-left: 42px solid #2a2a2a; }
.tabs { position: absolute; top: 8px; right: 2px; display: flex; flex-direction: column; gap: 16px; }
.tabs button { width: 13px; min-height: 70px; gap: 4px; writing-mode: vertical-rl; background: #2e2e2e; color: #e4e4e4; font-family: Lato, sans-serif; font-weight: 700; }
.tabs svg { width: 9px; height: 9px; }
.vscroll { display: flex; flex-direction: column; justify-content: space-between; align-items: center; width: 9px; padding: 1px 0; background: #f4f4f4; color: #444; }
.vscroll svg, .hscroll svg { width: 6px; height: 6px; }
.vscroll .thumb { width: 7px; height: 44%; margin-top: 90px; background: #cdcdcd; }
.up { transform: rotate(180deg); }
.left { transform: rotate(90deg); }
.right { transform: rotate(-90deg); }
.hscroll { display: flex; align-items: center; justify-content: space-between; height: 10px; padding: 0 11px 0 2px; border: solid #aaa; border-width: 1px 0; background: #fff; color: #333; }
.hscroll .thumb { width: 25%; height: 8px; margin-right: auto; margin-left: 25px; background: #cdcdcd; }
.schematic .vscroll, .schematic .hscroll { background: #f0f0f0; color: #999; }
.status { display: flex; align-items: center; height: 12px; padding: 0 12px 0 3px; gap: 2px; font-family: "Liberation Sans", sans-serif; }
.status span { flex: 1; white-space: nowrap; }
.status svg { width: 10px; height: 10px; }
.board .status { padding-right: 9px; }
.schematic .status { padding-left: 2px; padding-right: 20px; }
```
